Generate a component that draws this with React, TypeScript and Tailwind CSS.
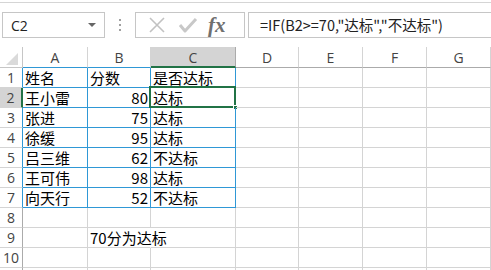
import React from "react";

const CJK = { fontFamily: '"Noto Sans CJK SC", "Noto Sans", sans-serif' };

// column widths include the right border line
const cols = [
  { key: "A", w: "w-[65px]" },
  { key: "B", w: "w-[63px]" },
  { key: "C", w: "w-[85px]" },
  { key: "D", w: "w-[63px]" },
  { key: "E", w: "w-[64px]" },
  { key: "F", w: "w-[64px]" },
  { key: "G", w: "w-[64px]" },
];

type Cell = { text?: string; num?: boolean };

const rows: Cell[][] = [
  [{ text: "姓名" }, { text: "分数" }, { text: "是否达标" }],
  [{ text: "王小雷" }, { text: "80", num: true }, { text: "达标" }],
  [{ text: "张进" }, { text: "75", num: true }, { text: "达标" }],
  [{ text: "徐缓" }, { text: "95", num: true }, { text: "达标" }],
  [{ text: "吕三维" }, { text: "62", num: true }, { text: "不达标" }],
  [{ text: "王可伟" }, { text: "98", num: true }, { text: "达标" }],
  [{ text: "向天行" }, { text: "52", num: true }, { text: "不达标" }],
  [],
  [{}, { text: "70分为达标" }],
  [],
];

function FormulaBar() {
  return (
    <div className="flex items-stretch h-[26px] mt-[9px]">
      {/* name box */}
      <div className="ml-[2px] w-[103px] border border-[#c6c6c6] flex items-center justify-between pl-[8px] pr-[8px]">
        <span className="text-[14px] text-[#222]" style={{ fontFamily: '"Open Sans", "Liberation Sans", sans-serif' }}>C2</span>
        <span className="w-0 h-0 border-l-[4px] border-r-[4px] border-t-[4px] border-l-transparent border-r-transparent border-t-[#666]" />
      </div>
      <div className="w-[30px] flex flex-col items-center justify-center gap-[3px]">
        <span className="w-[2px] h-[2px] bg-[#a0a0a0]" />
        <span className="w-[2px] h-[2px] bg-[#a0a0a0]" />
        <span className="w-[2px] h-[2px] bg-[#a0a0a0]" />
      </div>
      {/* cancel / enter / fx */}
      <div className="w-[110px] border border-[#c6c6c6] flex items-center">
        <svg width="18" height="18" viewBox="0 0 18 18" className="ml-[12px]">
          <path d="M2 2 L16 16 M16 2 L2 16" stroke="#c2c2c2" strokeWidth="1.6" fill="none" />
        </svg>
        <svg width="20" height="18" viewBox="0 0 20 18" className="ml-[12px]">
          <path d="M2 9 L7 15 L18 3" stroke="#c8c8c8" strokeWidth="3" fill="none" strokeLinejoin="round" />
        </svg>
        <span
          className="ml-[10px] text-[21px] italic font-bold text-[#707070] leading-none"
          style={{ fontFamily: '"Liberation Serif", serif' }}
        >
          fx
        </span>
      </div>
      <div className="ml-[3px] flex-1 border border-[#c6c6c6] border-r-0 flex items-center pl-[11px]">
        <span className="text-[14.5px] text-[#222] whitespace-nowrap" style={CJK}>
          =IF(B2&gt;=70,"达标","不达标")
        </span>
      </div>
    </div>
  );
}

function HeaderRow() {
  return (
    <div className="flex h-[21px] mt-[9px]">
      <div className="w-[23px] border-r border-b border-[#c6c6c6] relative">
        <svg width="23" height="20" className="absolute left-0 top-0">
          <polygon points="18,6 18,18 6,18" fill="#dadada" />
        </svg>
      </div>
      {cols.map((c, i) => {
        const sel = c.key === "C";
        const table = i < 3;
        return (
          <div
            key={c.key}
            className={`${c.w} border-r flex items-center justify-center text-[14px] ${
              sel
                ? "bg-[#d4d4d4] border-b-2 border-b-[#217346] border-r-[#ababab]"
                : "border-b border-r-[#d4d4d4]"
            } ${table && !sel ? "border-b-[#2f98d6]" : !sel ? "border-b-[#ababab]" : ""}`}
            style={{ fontFamily: '"Open Sans", "Liberation Sans", sans-serif' }}
          >
            <span className={sel ? "text-[#444] mt-[2px]" : "text-[#444]"}>{c.key}</span>
          </div>
        );
      })}
    </div>
  );
}

export default function App() {
  return (
    <div className="w-[491px] h-[270px] overflow-hidden bg-white relative">
      <div className="h-[3px] border-b border-[#d5d5d5]" />
      <FormulaBar />
      <HeaderRow />
      {rows.map((r, ri) => {
        const rowNo = ri + 1;
        const inTable = rowNo <= 7;
        const selRow = rowNo === 2;
        return (
          <div key={ri} className="flex h-[20px]">
            <div
              className={`w-[23px] border-r border-b flex items-center justify-center text-[14px] ${
                selRow ? "bg-[#d4d4d4] border-r-2 border-r-[#217346]" : ""
              } ${inTable && !selRow ? "border-r-[#2f98d6]" : !selRow ? "border-r-[#ababab]" : ""} border-b-[#d4d4d4]`}
              style={{ fontFamily: '"Open Sans", "Liberation Sans", sans-serif' }}
            >
              <span className="text-[#444]">{rowNo}</span>
            </div>
            {cols.map((c, ci) => {
              const cell = r[ci] ?? {};
              const tableCell = inTable && ci < 3;
              const isSel = rowNo === 2 && c.key === "C";
              const overflow = rowNo === 9 && c.key === "B";
              return (
                <div
                  key={c.key}
                  className={`${c.w} shrink-0 border-r border-b relative flex items-center ${
                    tableCell ? "border-[#2f98d6]" : "border-[#d4d4d4]"
                  } ${overflow ? "border-r-transparent" : ""} ${
                    cell.num ? "justify-end pr-[2px]" : "pl-[2px]"
                  }`}
                >
                  {cell.text && (
                    <span
                      className={`text-[15px] text-black leading-none whitespace-nowrap ${
                        overflow ? "absolute left-[2px] top-[2px]" : ""
                      }`}
                      style={CJK}
                    >
                      {cell.text}
                    </span>
                  )}
                  {isSel && (
                    <>
                      <span className="absolute left-[-2px] top-[-2px] right-[-1px] bottom-[-1px] border-2 border-[#217346] pointer-events-none" />
                      <span className="absolute right-[-3px] bottom-[-3px] w-[5px] h-[5px] bg-[#217346] border border-white" />
                    </>
                  )}
                </div>
              );
            })}
          </div>
        );
      })}
      {/* partial row 11 below the window edge */}
      <div className="flex h-[20px]">
        <div className="w-[23px] border-r border-[#ababab]" />
        {cols.map((c) => (
          <div key={c.key} className={`${c.w} shrink-0 border-r border-[#d4d4d4]`} />
        ))}
      </div>
    </div>
  );
}
